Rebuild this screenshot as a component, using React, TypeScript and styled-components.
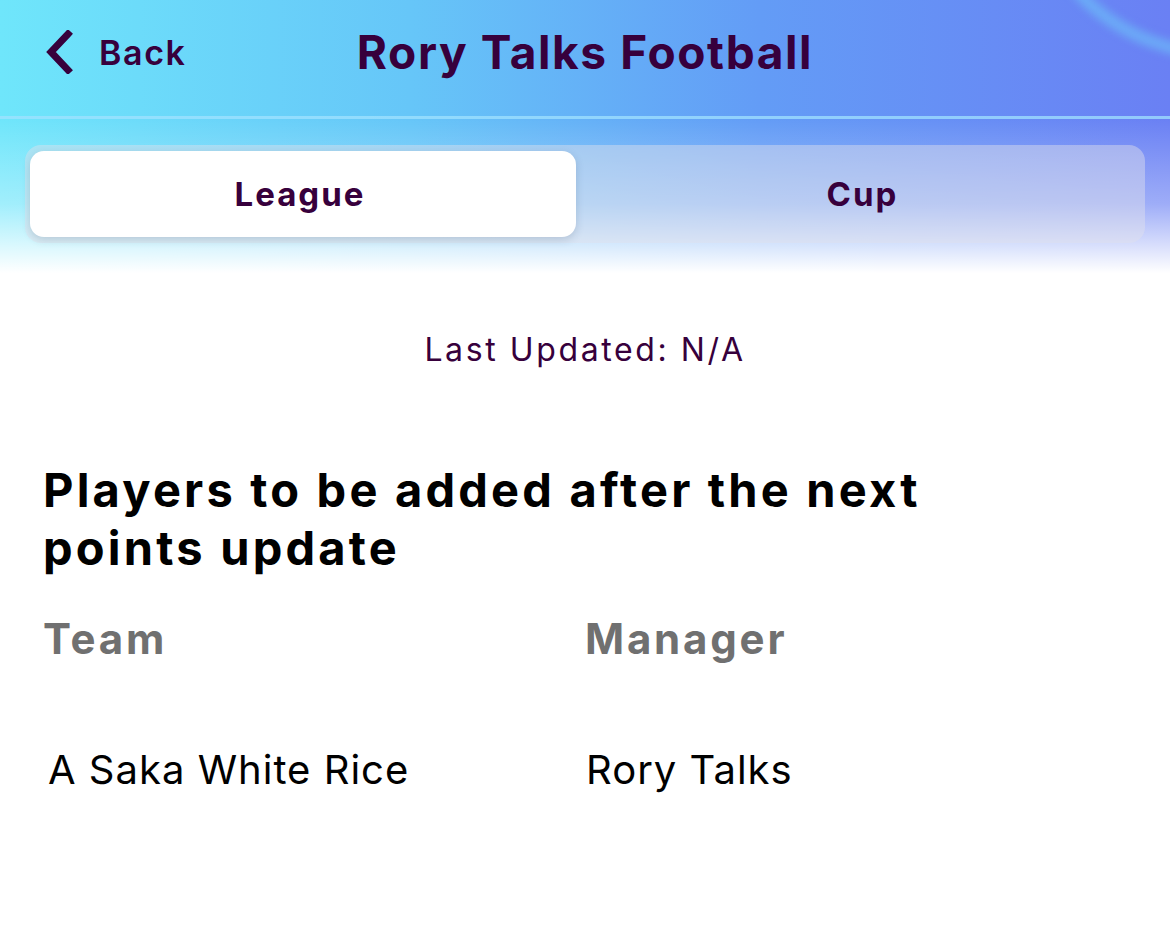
import React from "react";
import styled, { createGlobalStyle } from "styled-components";

const Global = createGlobalStyle`
  html, body { margin: 0; padding: 0; background: #ffffff; }
  body { font-family: Inter, "Noto Sans", "Liberation Sans", sans-serif; }
  * { box-sizing: border-box; }
`;

const Page = styled.div`
  width: 1170px;
  min-height: 952px;
  background: #ffffff;
  overflow: hidden;
`;

const Hero = styled.div`
  position: relative;
  background: linear-gradient(90deg, #6fe6fb 0%, #66c6f8 35%, #639cf6 65%, #6a80f4 100%);
  overflow: hidden;
`;

const Shine = styled.div`
  position: absolute;
  top: -340px;
  right: -250px;
  width: 400px;
  height: 400px;
  border-radius: 50%;
  border: 12px solid rgba(110, 220, 250, 0.45);
  filter: blur(4px);
  pointer-events: none;
`;

const TopBar = styled.header`
  position: relative;
  height: 116px;
  display: grid;
  grid-template-columns: 1fr auto 1fr;
  align-items: center;
  padding: 0 44px 12px;
`;

const BackButton = styled.button`
  justify-self: start;
  display: flex;
  align-items: center;
  gap: 25px;
  background: none;
  border: 0;
  padding: 0;
  color: #37003c;
  font-family: inherit;
  font-size: 34px;
  font-weight: 600;
  letter-spacing: 1.6px;
  cursor: pointer;
`;

const Title = styled.h1`
  margin: 0;
  color: #37003c;
  font-size: 46px;
  line-height: 56px;
  font-weight: 700;
  letter-spacing: 1.6px;
`;

const Divider = styled.div`
  height: 3px;
  background: rgba(160, 225, 255, 0.75);
`;

const TabsArea = styled.div`
  position: relative;
  padding: 26px 25px 30px;
  background: linear-gradient(180deg, rgba(255,255,255,0) 0%, rgba(255,255,255,0.35) 55%, #ffffff 100%);
`;

const Segmented = styled.div`
  display: grid;
  grid-template-columns: 1fr 1fr;
  height: 98px;
  padding: 6px 5px;
  border-radius: 16px;
  background: rgba(225, 225, 235, 0.45);
`;

const Tab = styled.button<{ $active?: boolean }>`
  border: 0;
  border-radius: 14px;
  margin-right: ${(p) => (p.$active ? "9px" : "0")};
  padding-left: ${(p) => (p.$active ? "0" : "6px")};
  background: ${(p) => (p.$active ? "#ffffff" : "transparent")};
  box-shadow: ${(p) => (p.$active ? "0 3px 8px rgba(40, 60, 90, 0.18)" : "none")};
  color: #37003c;
  font-family: inherit;
  font-size: 33px;
  font-weight: 700;
  letter-spacing: 2px;
  cursor: pointer;
`;

const Updated = styled.p`
  margin: 58px 0 0;
  text-align: center;
  color: #37003c;
  font-size: 32px;
  line-height: 38px;
  font-weight: 400;
  letter-spacing: 2.6px;
`;

const Section = styled.section`
  padding: 0 43px;
`;

const Heading = styled.h2`
  margin: 92px 0 0;
  max-width: 940px;
  color: #000000;
  font-size: 47px;
  line-height: 58px;
  font-weight: 700;
  letter-spacing: 3.2px;
`;

const Row = styled.div`
  display: grid;
  grid-template-columns: 542px 1fr;
`;

const HeadCell = styled.div`
  color: #707070;
  font-size: 42px;
  line-height: 47px;
  font-weight: 700;
  letter-spacing: 2.8px;
`;

const Cell = styled.div<{ $indent?: number }>`
  color: #000000;
  font-size: 40px;
  line-height: 44px;
  font-weight: 400;
  letter-spacing: 1px;
  padding-left: ${(p) => p.$indent ?? 0}px;
`;

const HeadRow = styled(Row)`
  margin-top: 38px;
`;

const DataRow = styled(Row)`
  margin-top: 86px;
`;

const Chevron = () => (
  <svg width="30" height="44" viewBox="0 0 30 44" fill="none">
    <path d="M24 4 L7 22 L24 40" stroke="#37003c" strokeWidth="7" strokeLinecap="square" strokeLinejoin="miter" />
  </svg>
);

export default function App() {
  return (
    <Page>
      <Global />
      <Hero>
        <Shine />
        <TopBar>
          <BackButton>
            <Chevron />
            Back
          </BackButton>
          <Title>Rory Talks Football</Title>
          <div />
        </TopBar>
        <Divider />
        <TabsArea>
          <Segmented>
            <Tab $active>League</Tab>
            <Tab>Cup</Tab>
          </Segmented>
        </TabsArea>
      </Hero>
      <Updated>Last Updated: N/A</Updated>
      <Section>
        <Heading>Players to be added after the next points update</Heading>
        <HeadRow>
          <HeadCell>Team</HeadCell>
          <HeadCell>Manager</HeadCell>
        </HeadRow>
        <DataRow>
          <Cell $indent={5}>A Saka White Rice</Cell>
          <Cell $indent={1}>Rory Talks</Cell>
        </DataRow>
      </Section>
    </Page>
  );
}
